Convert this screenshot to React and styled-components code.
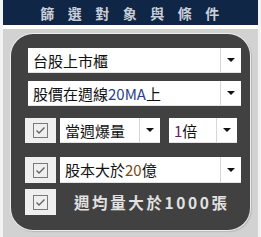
import React from "react";
import styled, { createGlobalStyle } from "styled-components";

const Global = createGlobalStyle`
  html, body { margin: 0; padding: 0; background: #f3f3f3; }
  body { font-family: "Noto Sans CJK TC", "Noto Sans", sans-serif; }
`;

const Frame = styled.div`
  margin-left: 3px;
  width: 255px;
  display: flex;
  flex-direction: column;
`;

const Header = styled.div`
  height: 25px;
  background: #0f2646;
  color: #c9cfd9;
  display: flex;
  align-items: center;
  justify-content: center;
  font-size: 14px;
  font-weight: 700;
  letter-spacing: 13.5px;
  padding-left: 12px;
  box-sizing: border-box;
`;

const Gap = styled.div`
  height: 4px;
  background: #ffffff;
`;

const Body = styled.div`
  height: 208px;
  background: #d2d2d2;
  padding: 5px 8px 7px 8px;
  box-sizing: border-box;
`;

const Panel = styled.div`
  height: 100%;
  background: #414141;
  border-radius: 22px;
  box-shadow: 0 0 0 1px #ededed, 1px 1px 1px 1px #b8b8b8;
  padding: 14px 9px 0 14px;
  box-sizing: border-box;
  display: flex;
  flex-direction: column;
`;

const Row = styled.div`
  display: flex;
  align-items: center;
  margin-top: ${(p) => p.$mt || 0}px;
  padding-left: ${(p) => p.$indent || 0}px;
  height: ${(p) => p.$h || 25}px;
`;

const Select = styled.div`
  background: #ffffff;
  height: ${(p) => p.$h || 25}px;
  width: ${(p) => p.$w}px;
  margin-left: ${(p) => p.$ml || 0}px;
  display: flex;
  align-items: stretch;
  box-sizing: border-box;
  border-bottom: 1px solid #e4e4e4;
`;

const SelectText = styled.div`
  flex: 1;
  display: flex;
  align-items: center;
  padding-left: 5px;
  font-size: 15px;
  color: #111;
  white-space: nowrap;
  overflow: hidden;
`;

const Num = styled.span`
  color: ${(p) => p.$c || "#111"};
`;

const ArrowBox = styled.div`
  width: 20px;
  border-left: 1px solid #d6d6d6;
  display: flex;
  align-items: center;
  justify-content: center;
`;

const Tri = styled.div`
  width: 0;
  height: 0;
  border-left: 4px solid transparent;
  border-right: 4px solid transparent;
  border-top: 4px solid #111;
`;

const Check = styled.div`
  width: 31px;
  height: ${(p) => p.$h || 25}px;
  background: #efefef;
  display: flex;
  align-items: center;
  justify-content: center;
  flex-shrink: 0;
`;

const Label = styled.div`
  margin-left: 18px;
  color: #e2e2e2;
  font-size: 15.5px;
  font-weight: 700;
  letter-spacing: 2.6px;
  white-space: nowrap;
`;

function CheckBox({ h }) {
  return (
    <Check $h={h}>
      <svg width="15" height="15" viewBox="0 0 15 15">
        <rect x="0.5" y="0.5" width="14" height="14" fill="none" stroke="#7a7a7a" strokeWidth="1" />
        <path d="M3.5 7.5 L6 10 L11.5 4.5" fill="none" stroke="#606060" strokeWidth="1.3" />
      </svg>
    </Check>
  );
}

function Dropdown({ w, ml, h, children }) {
  return (
    <Select $w={w} $ml={ml} $h={h}>
      <SelectText>{children}</SelectText>
      <ArrowBox>
        <Tri />
      </ArrowBox>
    </Select>
  );
}

export default function App() {
  return (
    <>
      <Global />
      <Frame>
        <Header>篩選對象與條件</Header>
        <Gap />
        <Body>
          <Panel>
            <Row $indent={3}>
              <Dropdown w={213}>台股上市櫃</Dropdown>
            </Row>
            <Row $indent={3} $mt={8}>
              <Dropdown w={213}>
                股價在週線<Num $c="#2a3f8c">20MA</Num>上
              </Dropdown>
            </Row>
            <Row $mt={12}>
              <CheckBox />
              <Dropdown w={100} ml={4}>當週爆量</Dropdown>
              <Dropdown w={68} ml={9}>
                <Num $c="#6a2060">1</Num>倍
              </Dropdown>
            </Row>
            <Row $mt={14} $h={26}>
              <CheckBox h={26} />
              <Dropdown w={181} ml={4} h={26}>
                股本大於<Num $c="#7a4a10">20</Num>億
              </Dropdown>
            </Row>
            <Row $mt={6} $h={26}>
              <CheckBox h={26} />
              <Label>週均量大於1000張</Label>
            </Row>
          </Panel>
        </Body>
      </Frame>
    </>
  );
}
